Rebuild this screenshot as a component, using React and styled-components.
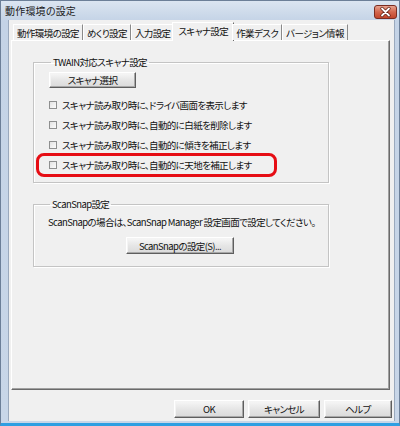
import styled, { createGlobalStyle, css } from "styled-components";

const GlobalStyle = createGlobalStyle`
  html, body {
    margin: 0;
    padding: 0;
    background: #ffffff;
  }
  body {
    font-family: "Noto Sans CJK JP", "Noto Sans", sans-serif;
    font-size: 9.5px;
    font-feature-settings: "palt";
    letter-spacing: -0.6px;
    color: #111;
  }
`;

const tabs = ["動作環境の設定", "めくり設定", "入力設定", "スキャナ設定", "作業デスク", "バージョン情報"];

const options = [
  "スキャナ読み取り時に、ドライバ画面を表示します",
  "スキャナ読み取り時に、自動的に白紙を削除します",
  "スキャナ読み取り時に、自動的に傾きを補正します",
  "スキャナ読み取り時に、自動的に天地を補正します",
];

const CloseIcon = () => (
  <svg width="23" height="14" viewBox="0 0 23 14">
    <defs>
      <linearGradient id="closeBg" x1="0" y1="0" x2="0" y2="1">
        <stop offset="0" stopColor="#e9a895" />
        <stop offset="0.5" stopColor="#d3664d" />
        <stop offset="1" stopColor="#c2442a" />
      </linearGradient>
    </defs>
    <rect x="0.5" y="0.5" width="22" height="13" rx="2.5" fill="url(#closeBg)" stroke="#7a2d22" />
    <path d="M8 3.5 L15 10.5 M15 3.5 L8 10.5" stroke="#5b1b12" strokeWidth="3.2" strokeLinecap="round" />
    <path d="M8 3.5 L15 10.5 M15 3.5 L8 10.5" stroke="#ffffff" strokeWidth="1.8" strokeLinecap="round" />
  </svg>
);

const App = () => {
  return (
    <>
      <GlobalStyle />
      <Window>
        <TitleBar>
          <Title>動作環境の設定</Title>
          <CloseButton>
            <CloseIcon />
          </CloseButton>
        </TitleBar>
        <Client>
          <TabStrip>
            {tabs.map((t) => (
              <Tab key={t} $active={t === "スキャナ設定"}>
                {t}
              </Tab>
            ))}
          </TabStrip>
          <Panel>
            <Group>
              <Legend>TWAIN対応スキャナ設定</Legend>
              <PushButton $width={87} $height={16}>
                スキャナ選択
              </PushButton>
              <OptionList>
                {options.map((o, i) => (
                  <Option key={o} $highlight={i === options.length - 1}>
                    <Check />
                    <span>{o}</span>
                  </Option>
                ))}
              </OptionList>
            </Group>
            <Group $snap>
              <Legend>ScanSnap設定</Legend>
              <Note>ScanSnapの場合は、ScanSnap Manager 設定画面で設定してください。</Note>
              <Centered>
                <PushButton $width={108} $height={17}>
                  ScanSnapの設定(S)...
                </PushButton>
              </Centered>
            </Group>
          </Panel>
          <ButtonRow>
            <PushButton $width={70} $height={18}>OK</PushButton>
            <PushButton $width={72} $height={18}>キャンセル</PushButton>
            <PushButton $width={68} $height={18}>ヘルプ</PushButton>
          </ButtonRow>
        </Client>
      </Window>
    </>
  );
};

export default App;

const Window = styled.div`
  width: 400px;
  height: 426px;
  box-sizing: border-box;
  display: flex;
  flex-direction: column;
  background: linear-gradient(to bottom, #dbe5f1 0px, #c4d3e6 20px, #c8d6e8 100%);
  border: 1px solid #6c7f98;
  border-bottom: 3px solid #2e9fe2;
`;

const TitleBar = styled.div`
  height: 19px;
  display: flex;
  align-items: center;
  justify-content: space-between;
  padding: 0 2px 0 4px;
`;

const Title = styled.div`
  font-size: 10px;
  color: #1b1b1b;
  letter-spacing: 0.2px;
`;

const CloseButton = styled.div`
  display: flex;
  margin-top: 2px;
`;

const Client = styled.div`
  flex: 1;
  display: flex;
  flex-direction: column;
  margin: 0 4px 2px 7px;
  padding: 2px 2px 3px 2px;
  background: #f0f0f0;
  border-left: 1px solid #9aa9bd;
  border-right: 1px solid #9aa9bd;
`;

const TabStrip = styled.div`
  display: flex;
  align-items: flex-end;
  height: 18px;
  padding-left: 2px;
  position: relative;
  z-index: 1;
`;

const Tab = styled.div`
  height: 16px;
  display: flex;
  align-items: center;
  padding: 0 3px;
  white-space: nowrap;
  box-sizing: border-box;
  background: #f0f0f0;
  border-top: 1px solid #ffffff;
  border-left: 1px solid #ffffff;
  border-right: 1px solid #8a8a8a;
  ${({ $active }) =>
    $active &&
    css`
      height: 19px;
      margin: 0 -2px -1px -2px;
      padding: 0 5px 2px;
      border-right-color: #6a6a6a;
    `}
`;

const Panel = styled.div`
  flex: 1;
  display: flex;
  flex-direction: column;
  gap: 15px;
  margin-right: 2px;
  padding: 15px 0 0 21px;
  border-top: 1px solid #ffffff;
  border-left: 1px solid #ffffff;
  border-right: 1px solid #6a6a6a;
  border-bottom: 1px solid #6a6a6a;
  box-shadow: inset -1px -1px 0 #a0a0a0;
`;

const Group = styled.fieldset`
  width: 296px;
  min-width: 0;
  box-sizing: border-box;
  margin: 0;
  padding: 4px 8px 7px 15px;
  border: 1px solid #c4c4c4;
  box-shadow: inset 1px 1px 0 #ffffff, 1px 1px 0 #ffffff;
  display: flex;
  flex-direction: column;
  align-items: flex-start;
  ${({ $snap }) =>
    $snap &&
    css`
      padding: 6px 8px 12px 14px;
      gap: 9px;
    `}
`;

const Legend = styled.legend`
  padding: 0 2px;
  margin-left: 2px;
  line-height: 12px;
  font-size: 9.5px;
`;

const PushButton = styled.div`
  width: ${({ $width }) => $width}px;
  height: ${({ $height }) => $height}px;
  box-sizing: border-box;
  display: flex;
  align-items: center;
  justify-content: center;
  white-space: nowrap;
  background: linear-gradient(to bottom, #f7f7f7, #e6e6e6 50%, #dadada);
  border: 1px solid;
  border-color: #ffffff #5e5e5e #5e5e5e #ffffff;
  box-shadow: inset -1px -1px 0 #a8a8a8, inset 1px 1px 0 #f4f4f4;
`;

const OptionList = styled.div`
  display: flex;
  flex-direction: column;
  align-items: flex-start;
  margin-top: 7px;
`;

const Option = styled.div`
  position: relative;
  height: 20px;
  display: flex;
  align-items: center;
  gap: 5px;
  white-space: nowrap;
  ${({ $highlight }) =>
    $highlight &&
    css`
      &::after {
        content: "";
        position: absolute;
        left: -13px;
        right: -25px;
        top: -2px;
        bottom: -2px;
        border: 3px solid #e60d14;
        border-radius: 8px;
      }
    `}
`;

const Check = styled.span`
  width: 8px;
  height: 8px;
  box-sizing: border-box;
  border: 1px solid #8e8f8f;
  background: linear-gradient(135deg, #e2e2e2, #fbfbfb);
`;

const Note = styled.div`
  line-height: 12px;
  white-space: nowrap;
`;

const Centered = styled.div`
  align-self: stretch;
  display: flex;
  justify-content: center;
  padding-right: 8px;
`;

const ButtonRow = styled.div`
  display: flex;
  justify-content: flex-end;
  gap: 4px;
  margin-top: 10px;
`;
